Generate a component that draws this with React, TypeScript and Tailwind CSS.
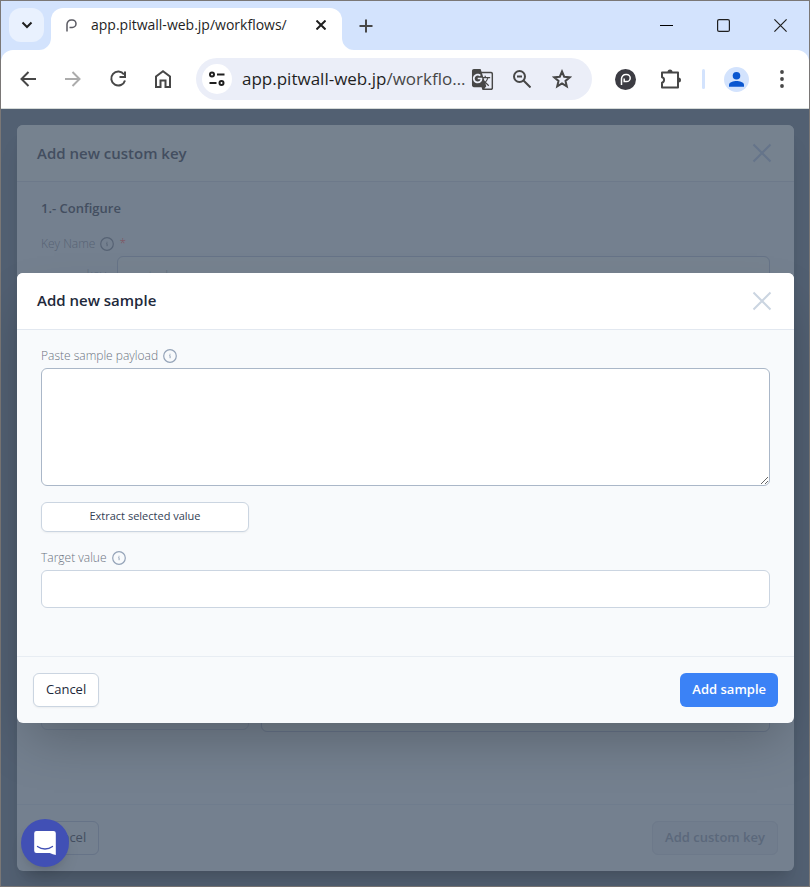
import type { ReactNode } from 'react'
import { MdGTranslate } from 'react-icons/md'

interface IconProps {
  children: ReactNode
  size?: number
  className?: string
}

function Icon({ children, size = 24, className = '' }: IconProps) {
  return (
    <svg
      width={size}
      height={size}
      viewBox={`0 0 ${size} ${size}`}
      fill="none"
      stroke="currentColor"
      strokeWidth={2}
      className={`shrink-0 ${className}`}
      aria-hidden="true"
    >
      {children}
    </svg>
  )
}

function InfoIcon() {
  return (
    <svg width="14" height="14" viewBox="0 0 14 14" fill="none" stroke="currentColor" aria-hidden="true">
      <circle cx="7" cy="7" r="6.300" strokeWidth="1.200" />
      <path d="M6.300 6.600h.8v2.600M7 4.800v.9" />
    </svg>
  )
}

function CloseIcon() {
  return (
    <Icon size={20}>
      <path d="M1.500 1.500l17 17M18.500 1.500l-17 17" />
    </Icon>
  )
}

function TabBar() {
  return (
    <div className="flex h-[49px] items-center bg-[#d3e3fd] pl-2 text-[#1f1f1f]">
      <button
        aria-label="Search tabs"
        className="mb-0.5 flex h-[34px] w-[35px] items-center justify-center rounded-xl bg-[#e9f1fe]"
      >
        <Icon size={12}>
          <path d="M1.500 3.500L6 8l4.500-4.500" />
        </Icon>
      </button>
      <div className="relative ml-[7px] flex h-[42px] w-[291px] items-center self-end rounded-t-xl bg-white pb-2 pl-[15px] pr-[11px]">
        <svg className="absolute -left-3 bottom-0" width="12" height="12" fill="#fff" aria-hidden="true">
          <path d="M12 0v12H0A12 12 0 0 0 12 0z" />
        </svg>
        <svg className="absolute -right-3 bottom-0" width="12" height="12" fill="#fff" aria-hidden="true">
          <path d="M0 0v12h12A12 12 0 0 1 0 0z" />
        </svg>
        <svg width="11" height="13" viewBox="0 0 11 13" fill="none" stroke="#5a5a62" strokeWidth="1.500" aria-hidden="true">
          <path d="M1 12.500V5.300A4.300 4.300 0 0 1 5.300 1h1a3.700 3.700 0 0 1 0 7.400H3.500" />
        </svg>
        <span className="ml-[14px] flex-1 whitespace-nowrap text-sm">
          app.pitwall-web.jp/workflows/
        </span>
        <button aria-label="Close tab" className="flex size-5 items-center justify-center">
          <Icon size={10}>
            <path d="M.500.500l9 9M9.500.500l-9 9" />
          </Icon>
        </button>
      </div>
      <button aria-label="New tab" className="ml-4 flex size-4 items-center justify-center text-[#474747]">
        <Icon size={14}>
          <path d="M7 .500v13M.500 7h13" />
        </Icon>
      </button>
      <div className="ml-auto flex">
        <button aria-label="Minimize" className="flex w-[57px] justify-center">
          <Icon size={13}>
            <path d="M0 6.500h13" strokeWidth={1} stroke="#000" />
          </Icon>
        </button>
        <button aria-label="Maximize" className="flex w-[57px] justify-center">
          <Icon size={13}>
            <rect x=".600" y=".600" width="11.800" height="11.800" rx="1.500" strokeWidth={1.2} />
          </Icon>
        </button>
        <button aria-label="Close window" className="flex w-[57px] justify-center">
          <Icon size={13}>
            <path d="M.400.400l12.200 12.200M12.600.400L.400 12.600" strokeWidth={1.2} />
          </Icon>
        </button>
      </div>
    </div>
  )
}

function ToolButton({ label, className = '', children }: { label: string; className?: string; children: ReactNode }) {
  return (
    <button aria-label={label} className={`flex h-10 shrink-0 items-center justify-center ${className || 'w-[45px]'}`}>
      {children}
    </button>
  )
}

function Toolbar() {
  return (
    <div className="bg-[#d3e3fd]">
      <div className="flex h-[58px] items-center rounded-t-xl bg-white pl-1 pr-[5px] text-[#474747]">
        <ToolButton label="Back">
          <Icon size={16}>
            <path d="M16 8H1.500M8.500 1L1.500 8l7 7" />
          </Icon>
        </ToolButton>
        <ToolButton label="Forward">
          <Icon size={16} className="text-[#acacac]">
            <path d="M0 8h14.500M7.500 1l7 7-7 7" />
          </Icon>
        </ToolButton>
        <ToolButton label="Reload">
          <Icon size={18}>
            <path d="M15 4.500A7 7 0 1 0 16 10.500M16 1.500v5.500h-5.500" />
          </Icon>
        </ToolButton>
        <ToolButton label="Home">
          <Icon size={20}>
            <path d="M3 18V7.500l7-5.300 7 5.300V18h-4.500v-6.500h-5V18z" />
          </Icon>
        </ToolButton>
        <div className="ml-[11px] flex h-[42px] min-w-0 flex-1 items-center rounded-full bg-[#ebeef8] pl-1.5 pr-2.5">
          <button
            aria-label="Site information"
            className="flex size-[30px] shrink-0 items-center justify-center rounded-full bg-white"
          >
            <Icon size={16}>
              <circle cx="3" cy="3.500" r="2" stroke="#1f1f1f" />
              <path d="M8 3.500h7.500M.500 12h7" stroke="#1f1f1f" />
              <circle cx="12.500" cy="12" r="2" stroke="#1f1f1f" />
            </Icon>
          </button>
          <span className="ml-2.5 min-w-0 flex-1 whitespace-nowrap text-[17px]">
            <span className="text-[#1f1f1f]">app.pitwall-web.jp</span>/workflo…
          </span>
          <ToolButton label="Translate this page" className="w-10">
            <MdGTranslate size={23} />
          </ToolButton>
          <ToolButton label="Zoom" className="w-10">
            <Icon size={18}>
              <circle cx="6.500" cy="6.500" r="5.500" />
              <path d="M10.500 10.500l7 7M4 6.500h5" />
            </Icon>
          </ToolButton>
          <ToolButton label="Bookmark this tab" className="w-10">
            <Icon size={20}>
              <path d="M10 2.500l2.200 5.200 5.600.500-4.300 3.700 1.300 5.500L10 14.500l-4.800 2.900 1.300-5.500L2.200 8.200l5.600-.500z" />
            </Icon>
          </ToolButton>
        </div>
        <div className="ml-[11px] flex items-center">
          <ToolButton label="Pitwall extension">
            <Icon size={21}>
              <circle cx="10.500" cy="10.500" r="10.500" fill="#3c3c43" stroke="none" />
              <path d="M6.500 16V9.700A4.300 4.300 0 0 1 10.800 5.400h.8a3.600 3.600 0 0 1 0 7.200H9.200V9.500" stroke="#fff" strokeWidth={1.5} />
            </Icon>
          </ToolButton>
          <ToolButton label="Extensions">
            <Icon size={22}>
              <path d="M2 4.500h16v15H2v-4.800a2.800 2.800 0 0 0 0-5.400z" strokeLinejoin="round" />
              <path d="M7.500 4a2.500 2.500 0 0 1 5 0zM18.500 9.500a2.500 2.500 0 0 1 0 5z" fill="currentColor" stroke="none" />
            </Icon>
          </ToolButton>
          <span className="mx-[9px] h-5 w-[3px] rounded-full bg-[#d3e3fd]" />
          <ToolButton label="Profile">
            <Icon size={25}>
              <circle cx="12.500" cy="12.500" r="12.500" fill="#d3e3fd" stroke="none" />
              <circle cx="12.500" cy="8.700" r="3.800" fill="#0b57d0" stroke="none" />
              <path d="M5 19.800v-2c0-2.600 4.500-3.800 7.500-3.800s7.500 1.200 7.500 3.800v2z" fill="#0b57d0" stroke="none" />
            </Icon>
          </ToolButton>
          <ToolButton label="Menu">
            <svg width="4" height="18" fill="currentColor" aria-hidden="true">
              <circle cx="2" cy="2" r="1.900" />
              <circle cx="2" cy="9" r="1.900" />
              <circle cx="2" cy="16" r="1.900" />
            </svg>
          </ToolButton>
        </div>
      </div>
    </div>
  )
}

function CustomKeyPanel() {
  return (
    <section className="flex flex-1 flex-col rounded-md bg-[#74808f] text-[#434e60] shadow-xl">
      <header className="flex h-[57px] items-center justify-between rounded-t-md border-b border-[#6d798a] bg-[#76828f] pl-5 pr-[22px]">
        <h2 className="text-[15px] font-semibold">Add new custom key</h2>
        <button aria-label="Close custom key" className="text-[#65748a]">
          <CloseIcon />
        </button>
      </header>
      <div className="flex flex-1 flex-col px-6 pb-[72px] pt-4">
        <h3 className="text-[13px] font-semibold leading-5">1.- Configure</h3>
        <label
          htmlFor="key-name"
          className="mt-4 flex h-5 items-center gap-[5px] text-xs font-light text-[#566274]"
        >
          Key Name
          <InfoIcon />
          <span className="text-[#81535f]">*</span>
        </label>
        <div className="mt-0.5 flex h-[38px] items-center text-[13px] font-light">
          <span className="w-[76px] pr-2 text-right text-[#5f6c7f]">key.</span>
          <input
            id="key-name"
            placeholder="meta_key"
            className="h-full min-w-0 flex-1 rounded-md border border-[#667387] bg-[#76828f] px-3 placeholder:text-[#5f6c7f]"
          />
        </div>
        <div className="mt-auto flex items-end gap-3">
          <button
            aria-label="Extract"
            className="mb-0.5 h-[30px] w-52 rounded-md border border-[#6a778a]"
          />
          <input
            aria-label="Extracted value"
            className="h-[38px] min-w-0 flex-1 rounded-md border border-[#667387] bg-[#76828f]"
          />
        </div>
      </div>
      <footer className="flex h-[67px] items-center justify-between border-t border-[#6f7c8d] px-4 text-[13px]">
        <button className="h-[34px] rounded-md border border-[#667387] px-3 font-medium">Cancel</button>
        <button className="h-[34px] rounded-md border border-[#6d798a] bg-[#717d8d] px-3 font-semibold text-[#5b687b]">
          Add custom key
        </button>
      </footer>
    </section>
  )
}

function SampleDialog() {
  return (
    <section
      role="dialog"
      aria-labelledby="sample-title"
      className="w-full rounded-md bg-[#f8fafc] text-[#1e293b] shadow-2xl"
    >
      <header className="flex h-[57px] items-center justify-between rounded-t-md border-b border-[#e2e8f0] bg-white pl-5 pr-[22px]">
        <h2 id="sample-title" className="text-[15px] font-semibold">
          Add new sample
        </h2>
        <button aria-label="Close" className="text-[#cbd5e1]">
          <CloseIcon />
        </button>
      </header>
      <div className="flex flex-col px-6 pb-12 pt-4">
        <label htmlFor="payload" className="flex h-5 items-center gap-[5px] text-xs font-light text-[#6b7280]">
          Paste sample payload
          <span className="text-[#94a3b8]">
            <InfoIcon />
          </span>
        </label>
        <textarea
          id="payload"
          className="mt-0.5 h-[118px] w-full rounded-md border border-[#aab7c8] bg-white p-3 text-sm outline-none"
        />
        <button className="mt-4 h-[30px] w-52 rounded-md border border-[#cbd5e1] bg-white text-[11px] text-[#334155] shadow-xs">
          Extract selected value
        </button>
        <label
          htmlFor="target"
          className="mt-4 flex h-5 items-center gap-[5px] text-xs font-light text-[#6b7280]"
        >
          Target value
          <span className="text-[#94a3b8]">
            <InfoIcon />
          </span>
        </label>
        <input
          id="target"
          className="mt-0.5 h-[38px] w-full rounded-md border border-[#cbd5e1] bg-white px-3 text-sm"
        />
      </div>
      <footer className="flex h-[67px] items-center justify-between border-t border-[#e8edf3] px-4 text-[13px]">
        <button className="h-[34px] rounded-md border border-[#cbd5e1] bg-white px-3 font-medium shadow-xs">
          Cancel
        </button>
        <button className="h-[34px] rounded-md bg-[#3b82f6] px-3 font-semibold text-white">Add sample</button>
      </footer>
    </section>
  )
}

export default function App() {
  return (
    <div className="flex min-h-screen flex-col border border-[#7a7776] bg-[#526072] font-['Open_Sans',sans-serif]">
      <TabBar />
      <Toolbar />
      <main className="relative flex flex-1 flex-col border-t border-[#d5dad8] py-4 pb-[15px] pl-4 pr-[15px]">
        <CustomKeyPanel />
        <div className="absolute inset-0 flex items-center pl-4 pr-[15px]">
          <SampleDialog />
        </div>
        <button
          aria-label="Open chat"
          className="absolute bottom-[19px] left-5 flex size-12 items-center justify-center rounded-full bg-[#4150b5] shadow-lg"
        >
          <svg width="22" height="24" viewBox="0 0 22 24" fill="none" aria-hidden="true">
            <path d="M2.500 0h17A2.300 2.300 0 0 1 21.800 2.300V24c-2-.300-4-1.200-6-2H2.500A2.300 2.300 0 0 1 .200 19.700V2.300A2.300 2.300 0 0 1 2.500 0z" fill="#fff" />
            <path d="M3.500 15.500c4.500 3.300 10.500 3.300 15 0" stroke="#4150b5" strokeWidth="1.300" strokeLinecap="round" />
          </svg>
        </button>
      </main>
    </div>
  )
}
